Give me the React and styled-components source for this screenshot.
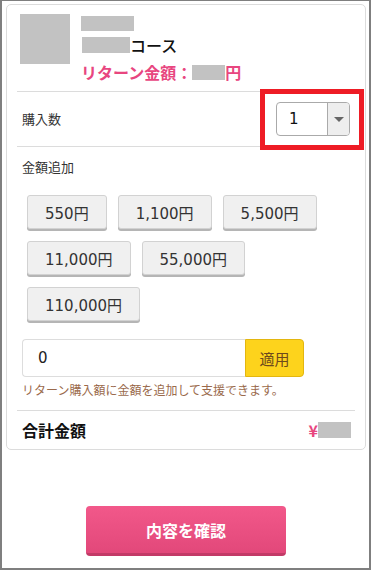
import React from "react";
import styled, { createGlobalStyle } from "styled-components";

const GlobalStyle = createGlobalStyle`
  html, body {
    margin: 0;
    padding: 0;
    background: #fff;
  }
  body {
    font-family: "DejaVu Sans", "Noto Sans CJK JP", sans-serif;
    color: #222;
  }
  * {
    box-sizing: border-box;
  }
`;

const Frame = styled.div`
  width: 371px;
  height: 570px;
  border: 2px solid #7f7f7f;
  border-top-width: 1px;
  padding: 3px 3px 0 4px;
  background: #fff;
`;

const Card = styled.section`
  width: 360px;
  border: 1px solid #dcdcdc;
  border-radius: 5px;
  padding: 0 10px;
`;

const Header = styled.div`
  display: flex;
  gap: 11px;
  padding: 9px 3px 11px;
  border-bottom: 1px solid #dcdcdc;
`;

const Thumb = styled.div`
  width: 50px;
  height: 50px;
  background: #c2c2c2;
  flex-shrink: 0;
`;

const TitleCol = styled.div`
  display: flex;
  flex-direction: column;
  margin-top: 1px;
`;

const Mask = styled.span`
  display: inline-block;
  width: ${(p) => p.w}px;
  height: ${(p) => p.h}px;
  background: #c2c2c2;
  margin-left: ${(p) => p.ml || 0}px;
`;

const TitleLine = styled.div`
  display: flex;
  align-items: center;
  height: 16px;
  line-height: 16px;
  font-size: 16px;
  font-family: "Noto Sans CJK JP", sans-serif;
  font-weight: ${(p) => (p.bold ? 700 : 500)};
  color: ${(p) => p.color || "#111"};
  margin-top: ${(p) => p.mt || 0}px;
`;

const QtyRow = styled.div`
  position: relative;
  display: flex;
  align-items: center;
  justify-content: space-between;
  height: 55px;
  padding: 0 5px;
  border-bottom: 1px solid #dcdcdc;
`;

const Label = styled.div`
  font-family: "Noto Sans CJK JP", sans-serif;
  font-size: 13px;
  line-height: 18px;
  color: #333;
`;

const SelectBox = styled.div`
  display: flex;
  width: 74px;
  height: 34px;
  border: 1px solid #aaa;
  border-radius: 4px;
  overflow: hidden;
  background: #fff;
`;

const SelectValue = styled.div`
  flex: 1;
  display: flex;
  align-items: center;
  padding-left: 12px;
  font-size: 15px;
  color: #111;
`;

const SelectArrow = styled.div`
  width: 22px;
  display: flex;
  align-items: center;
  justify-content: center;
  background: #eee;
  border-left: 1px solid #aaa;

  &::after {
    content: "";
    border-left: 5px solid transparent;
    border-right: 5px solid transparent;
    border-top: 5px solid #666;
  }
`;

const Highlight = styled.div`
  position: absolute;
  left: 243px;
  top: -3px;
  width: 104px;
  height: 61px;
  border: 5px solid #ee1c25;
  pointer-events: none;
`;

const AddSection = styled.div`
  padding: 11px 5px 12px;
  border-bottom: 1px solid #dcdcdc;
`;

const AmountGrid = styled.div`
  display: flex;
  flex-wrap: wrap;
  gap: 12px 11px;
  padding: 0 5px;
  margin-top: 19px;
`;

const AmountButton = styled.button`
  height: 34px;
  padding: 0 17px;
  border: 1px solid #d2d2d2;
  border-radius: 3px;
  background: #f0f0f0;
  box-shadow: 0 2px 0 #b5b5b5;
  font-family: "DejaVu Sans", "Noto Sans CJK JP", sans-serif;
  font-size: 15px;
  color: #333;
  cursor: pointer;
`;

const InputRow = styled.div`
  display: flex;
  margin-top: 18px;
`;

const AmountInput = styled.input`
  width: 223px;
  height: 38px;
  border: 1px solid #ddd;
  border-right: none;
  border-radius: 4px 0 0 4px;
  padding: 0 15px;
  font-family: "DejaVu Sans", sans-serif;
  font-size: 15px;
  color: #222;
  outline: none;
`;

const ApplyButton = styled.button`
  width: 59px;
  height: 38px;
  border: 1px solid #e3b610;
  border-radius: 0 4px 4px 0;
  background: #fdd31c;
  font-family: "Noto Sans CJK JP", sans-serif;
  font-size: 15px;
  color: #6e4a1c;
`;

const Help = styled.p`
  margin: 5px 0 0;
  font-family: "Noto Sans CJK JP", sans-serif;
  font-size: 12px;
  line-height: 16px;
  color: #9a6a4c;
`;

const TotalRow = styled.div`
  display: flex;
  align-items: center;
  justify-content: space-between;
  height: 38px;
  padding: 0 4px 0 5px;
`;

const TotalLabel = styled.span`
  font-family: "Noto Sans CJK JP", sans-serif;
  font-size: 16px;
  font-weight: 700;
  color: #111;
`;

const TotalValue = styled.span`
  display: flex;
  align-items: center;
  font-family: "Noto Sans CJK JP", sans-serif;
  font-size: 16px;
  font-weight: 700;
  color: #e8467f;
`;

const Footer = styled.div`
  display: flex;
  justify-content: center;
  padding-top: 56px;
`;

const ConfirmButton = styled.button`
  width: 200px;
  height: 50px;
  border: none;
  border-bottom: 3px solid #c23a67;
  border-radius: 4px;
  background: linear-gradient(#f2588a, #e2487a);
  color: #fff;
  font-family: "Noto Sans CJK JP", sans-serif;
  font-size: 16px;
  font-weight: 700;
  cursor: pointer;
`;

const amounts = ["550円", "1,100円", "5,500円", "11,000円", "55,000円", "110,000円"];

export default function App() {
  return (
    <>
      <GlobalStyle />
      <Frame>
        <Card>
          <Header>
            <Thumb />
            <TitleCol>
              <TitleLine>
                <Mask w={53} h={15} />
              </TitleLine>
              <TitleLine mt={6}>
                <Mask w={48} h={16} ml={1} />
                コース
              </TitleLine>
              <TitleLine mt={11} bold color="#e8467f">
                リターン金額：
                <Mask w={33} h={15} />
                円
              </TitleLine>
            </TitleCol>
          </Header>

          <QtyRow>
            <Label>購入数</Label>
            <SelectBox>
              <SelectValue>1</SelectValue>
              <SelectArrow />
            </SelectBox>
            <Highlight />
          </QtyRow>

          <AddSection>
            <Label>金額追加</Label>
            <AmountGrid>
              {amounts.map((a) => (
                <AmountButton key={a}>{a}</AmountButton>
              ))}
            </AmountGrid>
            <InputRow>
              <AmountInput defaultValue="0" />
              <ApplyButton>適用</ApplyButton>
            </InputRow>
            <Help>リターン購入額に金額を追加して支援できます。</Help>
          </AddSection>

          <TotalRow>
            <TotalLabel>合計金額</TotalLabel>
            <TotalValue>
              ¥<Mask w={33} h={16} />
            </TotalValue>
          </TotalRow>
        </Card>
        <Footer>
          <ConfirmButton>内容を確認</ConfirmButton>
        </Footer>
      </Frame>
    </>
  );
}
